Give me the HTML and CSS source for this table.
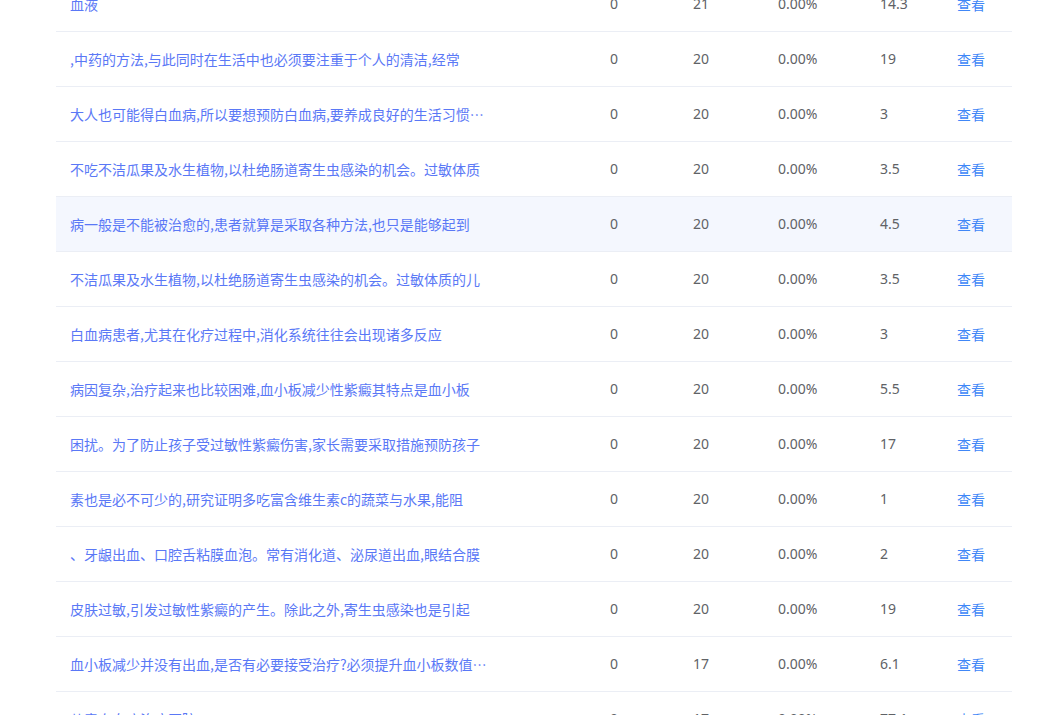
FILE: index.html
```html
<!DOCTYPE html>
<html lang="zh-CN">
<head>
<meta charset="utf-8">
<title>文章列表</title>
<link rel="stylesheet" href="styles.css">
</head>
<body>
<div class="page">
  <table class="list">
    <colgroup>
      <col class="c-title"><col class="c-a"><col class="c-b"><col class="c-c"><col class="c-d"><col class="c-e">
    </colgroup>
    <tbody>
      <tr><td><span class="title">血液</span></td><td>0</td><td>21</td><td>0.00%</td><td>14.3</td><td><a class="view">查看</a></td></tr>
      <tr><td><span class="title">,中药的方法,与此同时在生活中也必须要注重于个人的清洁,经常</span></td><td>0</td><td>20</td><td>0.00%</td><td>19</td><td><a class="view">查看</a></td></tr>
      <tr><td><span class="title">大人也可能得白血病,所以要想预防白血病,要养成良好的生活习惯好的习惯</span></td><td>0</td><td>20</td><td>0.00%</td><td>3</td><td><a class="view">查看</a></td></tr>
      <tr><td><span class="title">不吃不洁瓜果及水生植物,以杜绝肠道寄生虫感染的机会。过敏体质</span></td><td>0</td><td>20</td><td>0.00%</td><td>3.5</td><td><a class="view">查看</a></td></tr>
      <tr class="hover"><td><span class="title">病一般是不能被治愈的,患者就算是采取各种方法,也只是能够起到</span></td><td>0</td><td>20</td><td>0.00%</td><td>4.5</td><td><a class="view">查看</a></td></tr>
      <tr><td><span class="title">不洁瓜果及水生植物,以杜绝肠道寄生虫感染的机会。过敏体质的儿</span></td><td>0</td><td>20</td><td>0.00%</td><td>3.5</td><td><a class="view">查看</a></td></tr>
      <tr><td><span class="title">白血病患者,尤其在化疗过程中,消化系统往往会出现诸多反应</span></td><td>0</td><td>20</td><td>0.00%</td><td>3</td><td><a class="view">查看</a></td></tr>
      <tr><td><span class="title">病因复杂,治疗起来也比较困难,血小板减少性紫癜其特点是血小板</span></td><td>0</td><td>20</td><td>0.00%</td><td>5.5</td><td><a class="view">查看</a></td></tr>
      <tr><td><span class="title">困扰。为了防止孩子受过敏性紫癜伤害,家长需要采取措施预防孩子</span></td><td>0</td><td>20</td><td>0.00%</td><td>17</td><td><a class="view">查看</a></td></tr>
      <tr><td><span class="title">素也是必不可少的,研究证明多吃富含维生素c的蔬菜与水果,能阻</span></td><td>0</td><td>20</td><td>0.00%</td><td>1</td><td><a class="view">查看</a></td></tr>
      <tr><td><span class="title">、牙龈出血、口腔舌粘膜血泡。常有消化道、泌尿道出血,眼结合膜</span></td><td>0</td><td>20</td><td>0.00%</td><td>2</td><td><a class="view">查看</a></td></tr>
      <tr><td><span class="title">皮肤过敏,引发过敏性紫癜的产生。除此之外,寄生虫感染也是引起</span></td><td>0</td><td>20</td><td>0.00%</td><td>19</td><td><a class="view">查看</a></td></tr>
      <tr><td><span class="title">血小板减少并没有出血,是否有必要接受治疗?必须提升血小板数值吗?</span></td><td>0</td><td>17</td><td>0.00%</td><td>6.1</td><td><a class="view">查看</a></td></tr>
      <tr><td><span class="title">儿童白血病治疗医院</span></td><td>0</td><td>17</td><td>0.00%</td><td>77.1</td><td><a class="view">查看</a></td></tr>
    </tbody>
  </table>
</div>
</body>
</html>
```

FILE: styles.css
```css
html, body {
  margin: 0;
  padding: 0;
  background: #ffffff;
  overflow: hidden;
}

body {
  font-family: "Noto Sans", "Noto Sans CJK SC", sans-serif;
  font-size: 14px;
  color: #606266;
}

.page {
  padding-left: 56px;
  margin-top: -23px;
}

.list {
  width: 956px;
  border-collapse: collapse;
  table-layout: fixed;
}

.c-title { width: 540px; }
.c-a { width: 83px; }
.c-b { width: 85px; }
.c-c { width: 102px; }
.c-d { width: 77px; }
.c-e { width: 69px; }

.list td {
  height: 54px;
  padding: 0 14px;
  border-bottom: 1px solid #ebeef5;
  vertical-align: middle;
  line-height: 20px;
  white-space: nowrap;
}

.list tr.hover td {
  background: #f4f7fe;
}

.title {
  display: block;
  max-width: 418px;
  overflow: hidden;
  text-overflow: ellipsis;
  white-space: nowrap;
  color: #5a78f6;
  font-family: "Noto Sans CJK SC", sans-serif;
}

.view {
  color: #4087f7;
  font-family: "Noto Sans CJK SC", sans-serif;
  cursor: pointer;
}
```
